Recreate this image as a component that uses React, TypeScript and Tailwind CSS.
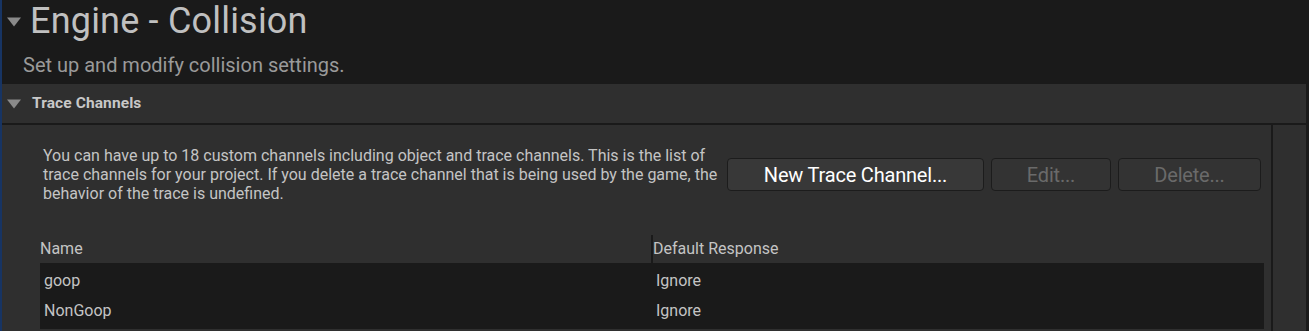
import React from 'react';

const Caret: React.FC<{ className?: string }> = ({ className }) => (
  <svg viewBox="0 0 14 9" className={className}>
    <path d="M0 0 H14 L7 9 Z" fill="#8a8a8a" />
  </svg>
);

const channels = [
  { name: 'goop', response: 'Ignore' },
  { name: 'NonGoop', response: 'Ignore' },
];

export default function App() {
  return (
    <div
      className="w-[1309px] h-[331px] overflow-hidden bg-[#1a1a1a] border-l-2 border-[#173463] flex flex-col"
      style={{ fontFamily: 'Roboto, "Noto Sans", sans-serif' }}
    >
      {/* Page header */}
      <div className="h-[84px] shrink-0 flex flex-col">
        <div className="flex items-center h-[42px]">
          <Caret className="w-[14px] h-[10px] ml-[5px] mt-[2px]" />
          <h1 className="ml-[9px] text-[36px] leading-none tracking-[0.2px] text-[#c0c0c0]">Engine - Collision</h1>
        </div>
        <p className="ml-[21px] mt-[13px] text-[20px] leading-none text-[#9a9a9a]">
          Set up and modify collision settings.
        </p>
      </div>

      {/* Trace Channels section */}
      <div className="flex-1 flex flex-col mr-[3px] bg-[#2f2f2f]">
        <div className="h-[41px] shrink-0 flex items-center border-b-2 border-[#1a1a1a]">
          <Caret className="w-[14px] h-[10px] ml-[5px]" />
          <span className="ml-[11px] text-[15.5px] font-bold tracking-[0.1px] text-[#c8c8c8]">Trace Channels</span>
        </div>

        <div className="flex-1 flex">
          <div className="w-[1271px] border-r-2 border-[#1a1a1a] pl-[38px]">
            <div className="flex items-center mt-[21px] pl-[3px]">
              <p className="w-[684px] text-[16px] leading-[19px] text-[#c4c4c4]">
                You can have up to 18 custom channels including object and trace channels. This is the list of trace
                channels for your project. If you delete a trace channel that is being used by the game, the behavior
                of the trace is undefined.
              </p>
              <div className="flex gap-[7px]">
                <button className="w-[257px] h-[33px] rounded-[4px] bg-[#383838] border border-[#1c1c1c] text-[20px] tracking-[-0.2px] text-white">
                  New Trace Channel...
                </button>
                <button className="w-[120px] h-[33px] rounded-[4px] bg-[#333333] border border-[#1c1c1c] text-[20px] tracking-[-0.2px] text-[#6a6a6a]">
                  Edit...
                </button>
                <button className="w-[143px] h-[33px] rounded-[4px] bg-[#333333] border border-[#1c1c1c] text-[20px] tracking-[-0.2px] text-[#6a6a6a]">
                  Delete...
                </button>
              </div>
            </div>

            <div className="mt-[32px] w-[1224px]">
              <div className="flex h-[28px] items-center text-[16px] text-[#c4c4c4]">
                <div className="w-[611px]">Name</div>
                <div className="h-full border-l-2 border-[#1a1a1a] flex items-center">Default Response</div>
              </div>
              <div className="bg-[#1a1a1a] py-[3px]">
                {channels.map((c) => (
                  <div key={c.name} className="flex h-[30px] items-center text-[16px] text-[#c4c4c4]">
                    <div className="w-[612px] pl-[4px]">{c.name}</div>
                    <div className="pl-[4px]">{c.response}</div>
                  </div>
                ))}
              </div>
            </div>
          </div>
        </div>
      </div>
    </div>
  );
}
